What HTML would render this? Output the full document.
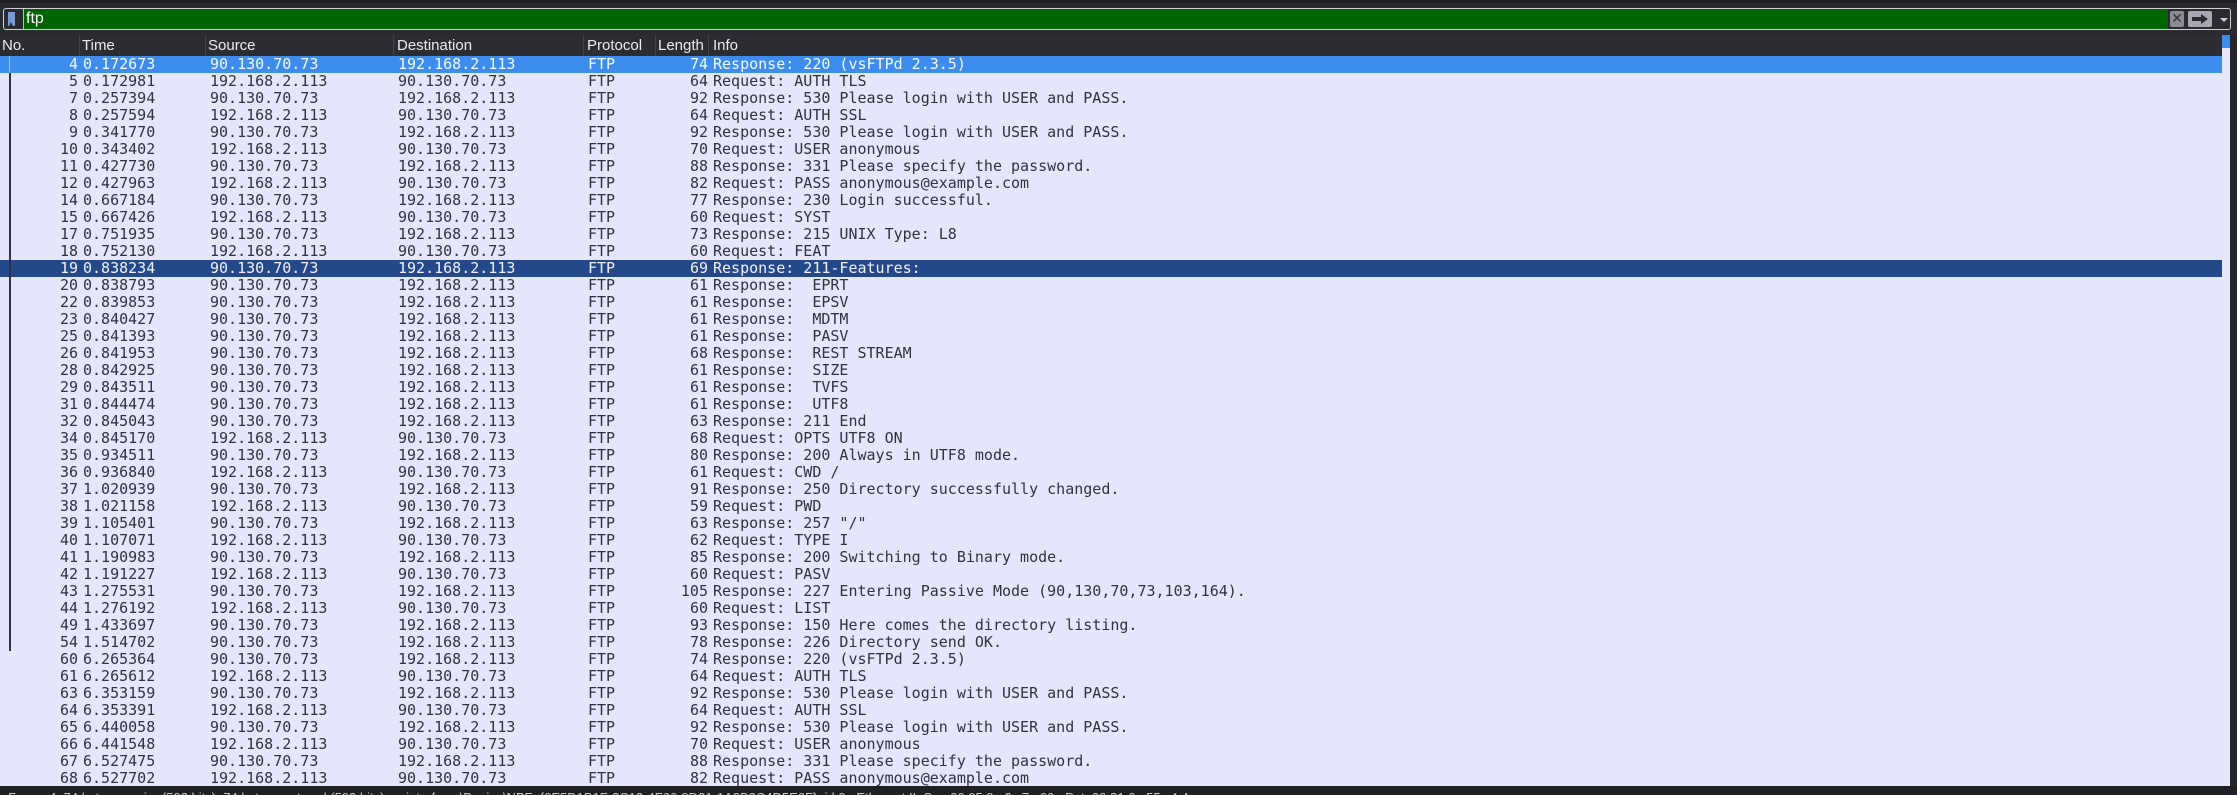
<!DOCTYPE html>
<html><head><meta charset="utf-8"><style>
*{margin:0;padding:0;box-sizing:border-box}
body{width:2237px;height:795px;overflow:hidden;background:#25262b;position:relative;font-family:"DejaVu Sans Mono",monospace}
#top{position:absolute;left:0;top:0;width:2237px;height:35px;background:#2a2b30;border-top:3px solid #1e1f23}
#fb{position:absolute;left:3px;top:8px;width:2228px;height:22px;border:1px solid #cfcfd4;border-radius:3px;background:#2a2b30;overflow:hidden}
#fb .g{position:absolute;left:19px;top:0;width:2145px;height:20px;background:#006400;border-left:1px solid #bbb}
#fb .t{position:absolute;left:22px;top:0;color:#fff;font:16px/20px "Liberation Sans",sans-serif}
#fb .bm{position:absolute;left:4px;top:3px;width:7px;height:14px;background:#7b9ad2}
#fb .bm:after{content:"";position:absolute;left:1px;bottom:0;border-left:2.5px solid transparent;border-right:2.5px solid transparent;border-bottom:4px solid #2a2b30}
#hdr{position:absolute;left:0;top:35px;width:2222px;height:22px;background:#2c2d32;color:#ececec;font:15px/22px "Liberation Sans",sans-serif}
#hdr span{position:absolute;top:0}
#hdr i{position:absolute;top:0;width:1px;height:22px;background:#44454b}
#tbl{position:absolute;left:0;top:56px;width:2222px;height:731px;background:#e6e6fa}
.r{position:absolute;left:0;width:2222px;height:17px;font-size:15px;line-height:17px;color:#2e3242;white-space:pre}
.r span{position:absolute;top:0}
.n{left:0;width:78px;text-align:right}
.ti{left:83px}.s{left:210px}.d{left:398px}.p{left:588px}
.l{left:640px;width:68px;text-align:right}
.i{left:713px}
.sel{background:#3d8dee;color:#f4f7ff}
.sel2{background:#24498a;color:#f0f2f8}
#vl{position:absolute;left:9px;top:73px;width:2px;height:578px;background:#2e3242}
#vl0{position:absolute;left:9px;top:56px;width:1px;height:17px;background:#9fc0f0}
#sb{position:absolute;left:2222px;top:35px;width:8px;height:752px;background:#e6e6fa}
#sbt{position:absolute;left:2222px;top:35px;width:8px;height:13px;background:#3d8dee}
#st{position:absolute;left:0;top:786px;width:2237px;height:9px;background:#202126;color:#c8c8cc;font:13px/13px "Liberation Sans",sans-serif;white-space:pre;overflow:hidden}
</style></head><body>
<div id="top"></div>
<div id="fb"><div class="bm"></div><div class="g"></div><div class="t">ftp</div>
<div style="position:absolute;left:2166px;top:2px;width:14px;height:16px;background:#8c8c92;border-radius:2px;color:#333;font:14px/16px 'DejaVu Sans',sans-serif;text-align:center">✕</div>
<div style="position:absolute;left:2184px;top:2px;width:24px;height:16px;background:#a8a8b0;border-radius:2px"><div style="position:absolute;left:4px;top:6px;width:10px;height:4px;background:#2a2b30"></div><div style="position:absolute;left:13px;top:3px;border-left:7px solid #2a2b30;border-top:5px solid transparent;border-bottom:5px solid transparent"></div></div>
<div style="position:absolute;left:2216px;top:9px;border-top:4px solid #ccc;border-left:4px solid transparent;border-right:4px solid transparent"></div>
</div>
<div id="hdr">
<span style="left:2px">No.</span><i style="left:79px"></i>
<span style="left:82px">Time</span><i style="left:205px"></i>
<span style="left:208px">Source</span><i style="left:393px"></i>
<span style="left:397px">Destination</span><i style="left:583px"></i>
<span style="left:587px">Protocol</span><i style="left:655px"></i>
<span style="left:658px">Length</span><i style="left:708px"></i>
<span style="left:713px">Info</span>
</div>
<div id="tbl"></div>
<div id="sb"></div><div id="sbt"></div>
<div id="rows">
<div class="r sel" style="top:56px"><span class="n">4</span><span class="ti">0.172673</span><span class="s">90.130.70.73</span><span class="d">192.168.2.113</span><span class="p">FTP</span><span class="l">74</span><span class="i">Response: 220 (vsFTPd 2.3.5)</span></div>
<div class="r" style="top:73px"><span class="n">5</span><span class="ti">0.172981</span><span class="s">192.168.2.113</span><span class="d">90.130.70.73</span><span class="p">FTP</span><span class="l">64</span><span class="i">Request: AUTH TLS</span></div>
<div class="r" style="top:90px"><span class="n">7</span><span class="ti">0.257394</span><span class="s">90.130.70.73</span><span class="d">192.168.2.113</span><span class="p">FTP</span><span class="l">92</span><span class="i">Response: 530 Please login with USER and PASS.</span></div>
<div class="r" style="top:107px"><span class="n">8</span><span class="ti">0.257594</span><span class="s">192.168.2.113</span><span class="d">90.130.70.73</span><span class="p">FTP</span><span class="l">64</span><span class="i">Request: AUTH SSL</span></div>
<div class="r" style="top:124px"><span class="n">9</span><span class="ti">0.341770</span><span class="s">90.130.70.73</span><span class="d">192.168.2.113</span><span class="p">FTP</span><span class="l">92</span><span class="i">Response: 530 Please login with USER and PASS.</span></div>
<div class="r" style="top:141px"><span class="n">10</span><span class="ti">0.343402</span><span class="s">192.168.2.113</span><span class="d">90.130.70.73</span><span class="p">FTP</span><span class="l">70</span><span class="i">Request: USER anonymous</span></div>
<div class="r" style="top:158px"><span class="n">11</span><span class="ti">0.427730</span><span class="s">90.130.70.73</span><span class="d">192.168.2.113</span><span class="p">FTP</span><span class="l">88</span><span class="i">Response: 331 Please specify the password.</span></div>
<div class="r" style="top:175px"><span class="n">12</span><span class="ti">0.427963</span><span class="s">192.168.2.113</span><span class="d">90.130.70.73</span><span class="p">FTP</span><span class="l">82</span><span class="i">Request: PASS anonymous@example.com</span></div>
<div class="r" style="top:192px"><span class="n">14</span><span class="ti">0.667184</span><span class="s">90.130.70.73</span><span class="d">192.168.2.113</span><span class="p">FTP</span><span class="l">77</span><span class="i">Response: 230 Login successful.</span></div>
<div class="r" style="top:209px"><span class="n">15</span><span class="ti">0.667426</span><span class="s">192.168.2.113</span><span class="d">90.130.70.73</span><span class="p">FTP</span><span class="l">60</span><span class="i">Request: SYST</span></div>
<div class="r" style="top:226px"><span class="n">17</span><span class="ti">0.751935</span><span class="s">90.130.70.73</span><span class="d">192.168.2.113</span><span class="p">FTP</span><span class="l">73</span><span class="i">Response: 215 UNIX Type: L8</span></div>
<div class="r" style="top:243px"><span class="n">18</span><span class="ti">0.752130</span><span class="s">192.168.2.113</span><span class="d">90.130.70.73</span><span class="p">FTP</span><span class="l">60</span><span class="i">Request: FEAT</span></div>
<div class="r sel2" style="top:260px"><span class="n">19</span><span class="ti">0.838234</span><span class="s">90.130.70.73</span><span class="d">192.168.2.113</span><span class="p">FTP</span><span class="l">69</span><span class="i">Response: 211-Features:</span></div>
<div class="r" style="top:277px"><span class="n">20</span><span class="ti">0.838793</span><span class="s">90.130.70.73</span><span class="d">192.168.2.113</span><span class="p">FTP</span><span class="l">61</span><span class="i">Response:  EPRT</span></div>
<div class="r" style="top:294px"><span class="n">22</span><span class="ti">0.839853</span><span class="s">90.130.70.73</span><span class="d">192.168.2.113</span><span class="p">FTP</span><span class="l">61</span><span class="i">Response:  EPSV</span></div>
<div class="r" style="top:311px"><span class="n">23</span><span class="ti">0.840427</span><span class="s">90.130.70.73</span><span class="d">192.168.2.113</span><span class="p">FTP</span><span class="l">61</span><span class="i">Response:  MDTM</span></div>
<div class="r" style="top:328px"><span class="n">25</span><span class="ti">0.841393</span><span class="s">90.130.70.73</span><span class="d">192.168.2.113</span><span class="p">FTP</span><span class="l">61</span><span class="i">Response:  PASV</span></div>
<div class="r" style="top:345px"><span class="n">26</span><span class="ti">0.841953</span><span class="s">90.130.70.73</span><span class="d">192.168.2.113</span><span class="p">FTP</span><span class="l">68</span><span class="i">Response:  REST STREAM</span></div>
<div class="r" style="top:362px"><span class="n">28</span><span class="ti">0.842925</span><span class="s">90.130.70.73</span><span class="d">192.168.2.113</span><span class="p">FTP</span><span class="l">61</span><span class="i">Response:  SIZE</span></div>
<div class="r" style="top:379px"><span class="n">29</span><span class="ti">0.843511</span><span class="s">90.130.70.73</span><span class="d">192.168.2.113</span><span class="p">FTP</span><span class="l">61</span><span class="i">Response:  TVFS</span></div>
<div class="r" style="top:396px"><span class="n">31</span><span class="ti">0.844474</span><span class="s">90.130.70.73</span><span class="d">192.168.2.113</span><span class="p">FTP</span><span class="l">61</span><span class="i">Response:  UTF8</span></div>
<div class="r" style="top:413px"><span class="n">32</span><span class="ti">0.845043</span><span class="s">90.130.70.73</span><span class="d">192.168.2.113</span><span class="p">FTP</span><span class="l">63</span><span class="i">Response: 211 End</span></div>
<div class="r" style="top:430px"><span class="n">34</span><span class="ti">0.845170</span><span class="s">192.168.2.113</span><span class="d">90.130.70.73</span><span class="p">FTP</span><span class="l">68</span><span class="i">Request: OPTS UTF8 ON</span></div>
<div class="r" style="top:447px"><span class="n">35</span><span class="ti">0.934511</span><span class="s">90.130.70.73</span><span class="d">192.168.2.113</span><span class="p">FTP</span><span class="l">80</span><span class="i">Response: 200 Always in UTF8 mode.</span></div>
<div class="r" style="top:464px"><span class="n">36</span><span class="ti">0.936840</span><span class="s">192.168.2.113</span><span class="d">90.130.70.73</span><span class="p">FTP</span><span class="l">61</span><span class="i">Request: CWD /</span></div>
<div class="r" style="top:481px"><span class="n">37</span><span class="ti">1.020939</span><span class="s">90.130.70.73</span><span class="d">192.168.2.113</span><span class="p">FTP</span><span class="l">91</span><span class="i">Response: 250 Directory successfully changed.</span></div>
<div class="r" style="top:498px"><span class="n">38</span><span class="ti">1.021158</span><span class="s">192.168.2.113</span><span class="d">90.130.70.73</span><span class="p">FTP</span><span class="l">59</span><span class="i">Request: PWD</span></div>
<div class="r" style="top:515px"><span class="n">39</span><span class="ti">1.105401</span><span class="s">90.130.70.73</span><span class="d">192.168.2.113</span><span class="p">FTP</span><span class="l">63</span><span class="i">Response: 257 "/"</span></div>
<div class="r" style="top:532px"><span class="n">40</span><span class="ti">1.107071</span><span class="s">192.168.2.113</span><span class="d">90.130.70.73</span><span class="p">FTP</span><span class="l">62</span><span class="i">Request: TYPE I</span></div>
<div class="r" style="top:549px"><span class="n">41</span><span class="ti">1.190983</span><span class="s">90.130.70.73</span><span class="d">192.168.2.113</span><span class="p">FTP</span><span class="l">85</span><span class="i">Response: 200 Switching to Binary mode.</span></div>
<div class="r" style="top:566px"><span class="n">42</span><span class="ti">1.191227</span><span class="s">192.168.2.113</span><span class="d">90.130.70.73</span><span class="p">FTP</span><span class="l">60</span><span class="i">Request: PASV</span></div>
<div class="r" style="top:583px"><span class="n">43</span><span class="ti">1.275531</span><span class="s">90.130.70.73</span><span class="d">192.168.2.113</span><span class="p">FTP</span><span class="l">105</span><span class="i">Response: 227 Entering Passive Mode (90,130,70,73,103,164).</span></div>
<div class="r" style="top:600px"><span class="n">44</span><span class="ti">1.276192</span><span class="s">192.168.2.113</span><span class="d">90.130.70.73</span><span class="p">FTP</span><span class="l">60</span><span class="i">Request: LIST</span></div>
<div class="r" style="top:617px"><span class="n">49</span><span class="ti">1.433697</span><span class="s">90.130.70.73</span><span class="d">192.168.2.113</span><span class="p">FTP</span><span class="l">93</span><span class="i">Response: 150 Here comes the directory listing.</span></div>
<div class="r" style="top:634px"><span class="n">54</span><span class="ti">1.514702</span><span class="s">90.130.70.73</span><span class="d">192.168.2.113</span><span class="p">FTP</span><span class="l">78</span><span class="i">Response: 226 Directory send OK.</span></div>
<div class="r" style="top:651px"><span class="n">60</span><span class="ti">6.265364</span><span class="s">90.130.70.73</span><span class="d">192.168.2.113</span><span class="p">FTP</span><span class="l">74</span><span class="i">Response: 220 (vsFTPd 2.3.5)</span></div>
<div class="r" style="top:668px"><span class="n">61</span><span class="ti">6.265612</span><span class="s">192.168.2.113</span><span class="d">90.130.70.73</span><span class="p">FTP</span><span class="l">64</span><span class="i">Request: AUTH TLS</span></div>
<div class="r" style="top:685px"><span class="n">63</span><span class="ti">6.353159</span><span class="s">90.130.70.73</span><span class="d">192.168.2.113</span><span class="p">FTP</span><span class="l">92</span><span class="i">Response: 530 Please login with USER and PASS.</span></div>
<div class="r" style="top:702px"><span class="n">64</span><span class="ti">6.353391</span><span class="s">192.168.2.113</span><span class="d">90.130.70.73</span><span class="p">FTP</span><span class="l">64</span><span class="i">Request: AUTH SSL</span></div>
<div class="r" style="top:719px"><span class="n">65</span><span class="ti">6.440058</span><span class="s">90.130.70.73</span><span class="d">192.168.2.113</span><span class="p">FTP</span><span class="l">92</span><span class="i">Response: 530 Please login with USER and PASS.</span></div>
<div class="r" style="top:736px"><span class="n">66</span><span class="ti">6.441548</span><span class="s">192.168.2.113</span><span class="d">90.130.70.73</span><span class="p">FTP</span><span class="l">70</span><span class="i">Request: USER anonymous</span></div>
<div class="r" style="top:753px"><span class="n">67</span><span class="ti">6.527475</span><span class="s">90.130.70.73</span><span class="d">192.168.2.113</span><span class="p">FTP</span><span class="l">88</span><span class="i">Response: 331 Please specify the password.</span></div>
<div class="r" style="top:770px"><span class="n">68</span><span class="ti">6.527702</span><span class="s">192.168.2.113</span><span class="d">90.130.70.73</span><span class="p">FTP</span><span class="l">82</span><span class="i">Request: PASS anonymous@example.com</span></div>
</div>
<div id="vl0"></div><div id="vl"></div>
<div id="st"><span style="position:relative;top:5px;left:8px">Frame 4: 74 bytes on wire (592 bits), 74 bytes captured (592 bits) on interface \Device\NPF_{0E5D1B1F-3C12-4F66-9D21-1A2B3C4D5E6F}, id 0   Ethernet II, Src: 00:05:9a:3c:7a:00   Dst: 00:21:6a:55:c4:4e</span></div>
</body></html>
